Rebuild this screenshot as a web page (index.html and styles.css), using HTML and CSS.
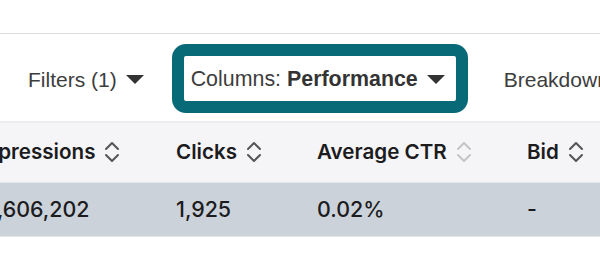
FILE: index.html
```html
<!DOCTYPE html>
<html>
<head>
<meta charset="utf-8">
<link rel="stylesheet" href="styles.css">
</head>
<body>
<div class="page">
  <div class="topbar"></div>
  <div class="toolbar">
    <div class="tool">Filters (1)<span class="caret"></span></div>
    <div class="tool highlight">Columns:&nbsp;<b>Performance</b><span class="caret"></span></div>
    <div class="tool breakdown">Breakdown</div>
  </div>
  <div class="table-wrap">
    <div class="grid head">
      <div class="cell">Impressions<svg class="sort" viewBox="0 0 16 22"><polyline points="2,8 8,2 14,8"/><polyline points="2,14 8,20 14,14"/></svg></div>
      <div class="cell">Clicks<svg class="sort" viewBox="0 0 16 22"><polyline points="2,8 8,2 14,8"/><polyline points="2,14 8,20 14,14"/></svg></div>
      <div class="cell">Average CTR<svg class="sort light" viewBox="0 0 16 22"><polyline points="2,8 8,2 14,8"/><polyline points="2,14 8,20 14,14"/></svg></div>
      <div class="cell">Bid<svg class="sort" viewBox="0 0 16 22"><polyline points="2,8 8,2 14,8"/><polyline points="2,14 8,20 14,14"/></svg></div>
    </div>
    <div class="grid row">
      <div class="cell num">1,606,202</div>
      <div class="cell">1,925</div>
      <div class="cell">0.02%</div>
      <div class="cell">-</div>
    </div>
  </div>
</div>
</body>
</html>
```
FILE: styles.css
```css
html, body {
  margin: 0;
  padding: 0;
  background: #ffffff;
  overflow: hidden;
}
.page {
  width: 600px;
  height: 270px;
  overflow: hidden;
}
.topbar {
  height: 33px;
  border-bottom: 1px solid #dedede;
}
.toolbar {
  height: 87px;
  box-sizing: border-box;
  padding-top: 1px;
  display: flex;
  align-items: center;
  padding-left: 28px;
  font-family: "Liberation Sans", Arial, sans-serif;
  font-size: 21px;
  color: #3d3d3d;
  white-space: nowrap;
}
.tool {
  display: flex;
  align-items: center;
  padding-top: 3px;
}
.tool b {
  font-weight: bold;
  color: #333333;
}
.caret {
  display: inline-block;
  width: 0;
  height: 0;
  margin-left: 9px;
  border-left: 9px solid transparent;
  border-right: 9px solid transparent;
  border-top: 9px solid #333333;
  margin-top: 0;
}
.highlight {
  margin-left: 28px;
  border: 12px solid #076a76;
  border-radius: 14px;
  height: 42px;
  padding: 3px 11px 0 7px;
  font-size: 21.4px;
}
.breakdown {
  margin-left: 36px;
}
.table-wrap {
  border-top: 2px solid #ececee;
  font-family: Inter, "Noto Sans", sans-serif;
  color: #1c1c1e;
}
.grid {
  display: grid;
  grid-template-columns: 202px 141px 210px 120px;
  margin-left: -26px;
  white-space: nowrap;
}
.head {
  height: 60px;
  background: #f5f5f7;
  font-weight: 600;
  font-size: 20.6px;
  border-bottom: 1px solid #e4e6ea;
  padding-bottom: 2px;
  box-sizing: border-box;
}
.row {
  height: 54px;
  background: #cbd2d9;
  font-weight: 500;
  font-size: 21.4px;
  border-bottom: 1px solid #e3e6ea;
  padding-bottom: 1px;
  box-sizing: border-box;
}
.cell {
  display: flex;
  align-items: center;
}
.row .num {
  padding-left: 14px;
}
.sort {
  width: 16px;
  height: 22px;
  margin-left: 9px;
  fill: none;
  stroke: #555555;
  stroke-width: 2;
  stroke-linecap: round;
  stroke-linejoin: round;
}
.sort.light {
  stroke: #c4c4c8;
}
```
